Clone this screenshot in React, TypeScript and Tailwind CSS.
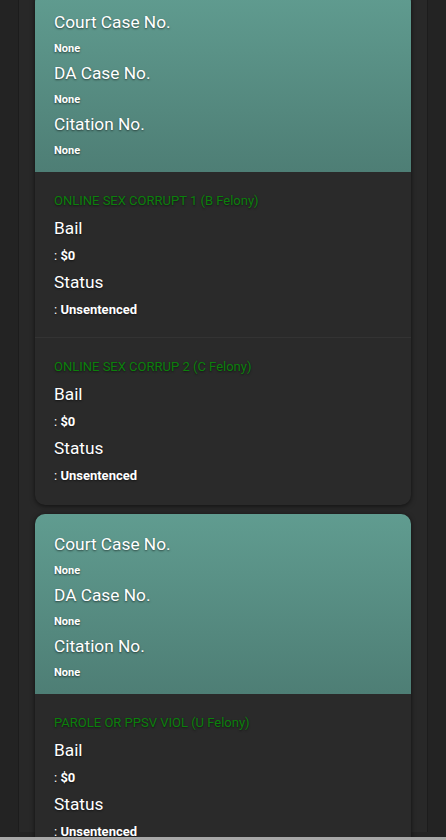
const headerFields = ["Court Case No.", "DA Case No.", "Citation No."];

type Charge = {
  name: string;
  bail: string;
  status: string;
};

type CaseItem = {
  id: string;
  charges: Charge[];
};

const cases: CaseItem[] = [
  {
    id: "c1",
    charges: [
      { name: "ONLINE SEX CORRUPT 1 (B Felony)", bail: "$0", status: "Unsentenced" },
      { name: "ONLINE SEX CORRUP 2 (C Felony)", bail: "$0", status: "Unsentenced" },
    ],
  },
  {
    id: "c2",
    charges: [{ name: "PAROLE OR PPSV VIOL (U Felony)", bail: "$0", status: "Unsentenced" }],
  },
];

const shadowText = "[text-shadow:0_1px_2px_rgba(0,0,0,0.55)]";

const CaseCard = ({ item, first }: { item: CaseItem; first?: boolean }) => {
  return (
    <section
      className={`mb-[9px] overflow-hidden rounded-[10px] bg-[#2a2a2a] shadow-[0_1px_5px_rgba(0,0,0,0.6)] ${
        first ? "-mt-[8px]" : ""
      }`}
    >
      <div className="bg-gradient-to-b from-[#609c90] to-[#4e7e75] px-[19px] pt-[19px] pb-[14px] text-white">
        {headerFields.map((label, i) => (
          <div key={label} className={i < headerFields.length - 1 ? "mb-[6px]" : ""}>
            <p className={`text-[17.3px] leading-[23px] ${shadowText}`}>{label}</p>
            <p className={`mt-[7px] text-[11px] font-bold leading-[15px] ${shadowText}`}>None</p>
          </div>
        ))}
      </div>

      {item.charges.map((charge, i) => (
        <div
          key={charge.name}
          className={`px-[19px] pt-[21px] ${i === item.charges.length - 1 ? "pb-[20px]" : "pb-[18px]"} ${
            i > 0 ? "border-t border-[#333333]" : ""
          }`}
        >
          <p className={`text-[13px] leading-[16px] text-[#0c800c] ${shadowText}`}>{charge.name}</p>
          <p className={`mt-[7px] text-[17.3px] leading-[24px] text-white ${shadowText}`}>Bail</p>
          <p className={`mt-[7px] text-[13px] leading-[18px] text-white ${shadowText}`}>
            : <span className="font-bold">{charge.bail}</span>
          </p>
          <p className={`mt-[5px] text-[17.3px] leading-[24px] text-white ${shadowText}`}>Status</p>
          <p className={`mt-[7px] text-[13px] leading-[18px] text-white ${shadowText}`}>
            : <span className="font-bold">{charge.status}</span>
          </p>
        </div>
      ))}
    </section>
  );
};

export default function App() {
  return (
    <div className="h-[840px] overflow-hidden bg-[#232323] pl-[18px] pr-[18px] font-['Roboto',sans-serif]">
      <div className="h-full border-x border-[#1c1c1c] bg-[#282828] px-[16px]">
        {cases.map((item, i) => (
          <CaseCard key={item.id} item={item} first={i === 0} />
        ))}
      </div>
      <div className="fixed inset-x-0 bottom-0 h-[3px] bg-[#a8a8a8]" />
    </div>
  );
}
